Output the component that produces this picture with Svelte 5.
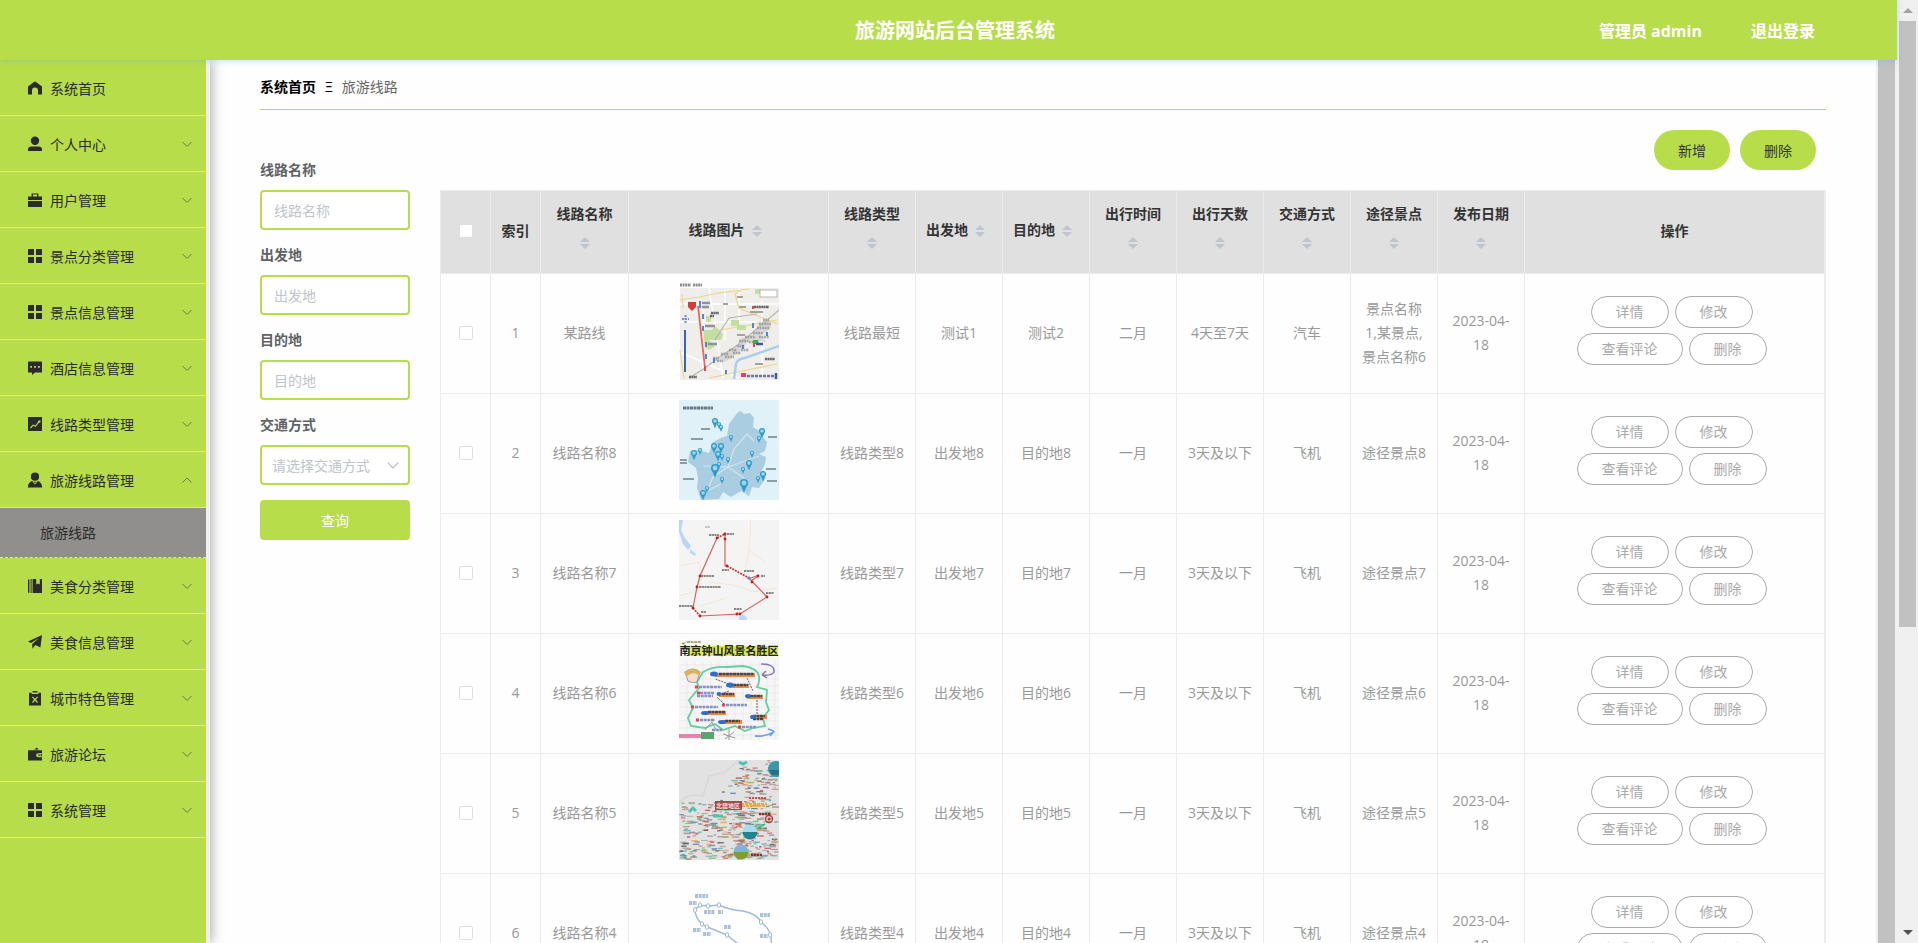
<script lang="ts">
    type MenuItem = { name: string; icon: string; plain?: boolean; children?: string[] };

    const menus: MenuItem[] = [
        { name: "系统首页", icon: "home", plain: true },
        { name: "个人中心", icon: "user" },
        { name: "用户管理", icon: "suitcase" },
        { name: "景点分类管理", icon: "grid" },
        { name: "景点信息管理", icon: "grid" },
        { name: "酒店信息管理", icon: "comment" },
        { name: "线路类型管理", icon: "chart" },
        { name: "旅游线路管理", icon: "custom", children: ["旅游线路"] },
        { name: "美食分类管理", icon: "book" },
        { name: "美食信息管理", icon: "plane" },
        { name: "城市特色管理", icon: "release" },
        { name: "旅游论坛", icon: "wallet" },
        { name: "系统管理", icon: "grid" },
    ];

    const icons: Record<string, string> = {
        home: "M7 0.4 L8 1 L14 5.6 V13.6 H10 V9.4 A3 3 0 0 0 4 9.4 V13.6 H0 V5.6 L6 1 Z",
        user: "M7 -0.4 A4.2 4.2 0 0 1 7 8 A4.2 4.2 0 0 1 7 -0.4 Z M0 14 V12.6 Q0 9.4 3.4 9.4 H10.6 Q14 9.4 14 12.6 V14 Z",
        suitcase:
            "M3.6 3.4 V0.4 H10.4 V3.4 H14 V7 H0 V3.4 Z M5 1.6 V3.4 H9 V1.6 Z M0 8 H14 V14 H0 Z",
        grid: "M0.6 0 H6 V6 H0 V0.6 Z M8 0 H13.4 L14 0.6 V6 H8 Z M0 8 H6 V14 H0.6 L0 13.4 Z M8 8 H14 V13.4 L13.4 14 H8 Z",
        comment:
            "M0.5 0.5 H13.5 L14 1 V11.6 H7 L4 14 V11.6 H0 V1 Z M2.2 5 V6.8 H4 V5 Z M6.1 5 V6.8 H7.9 V5 Z M10 5 V6.8 H11.8 V5 Z",
        chart: "M0 0 H14 V14 H0 Z M2 10.6 L2.8 11.4 L5.4 8.8 L7.6 10 L11 5.4 L12.2 6 L12.4 3 L9.6 4.2 L10.2 4.8 L7.2 8.6 L5 7.6 Z",
        custom: "M7 -0.4 A3.9 3.9 0 0 1 7 7.8 A3.9 3.9 0 0 1 7 -0.4 Z M-0.2 14.4 Q0.2 9.2 4.2 8 L7 11.6 L9.8 8 Q13.8 9.2 14.2 14.4 Z M7 10.2 L5.8 8.8 H8.2 Z",
        book: "M0 0.4 H1.4 V13.8 H0 Z M2.6 0 H3.6 V14 H2.6 Z M4.6 0 H8.2 V5.6 L10 4.4 L11.8 5.6 V0 H14 V14 H4.6 Z",
        plane: "M14 0 L12.4 12.6 L7.4 10 L4.4 13.8 L4.2 9 L11.2 2.8 L3 8 L0 6.4 Z",
        release:
            "M4.6 0 H9.4 V1.6 H4.6 Z M1 1.8 H3.6 V3 H10.4 V1.8 H13 V14.4 H1 Z M4.8 5.4 L4 6.2 L6 8.6 L4 11.2 L5 12 L7 9.6 L9 12 L10 11.2 L8 8.6 L10 6.2 L9.2 5.4 L7 7.8 Z",
        wallet: "M6 2.6 L9 0.4 L10.8 2.6 Z M0.6 3.2 H13.4 L14 3.8 V6.2 H10.6 Q8 6.2 8 8.2 Q8 10.2 10.6 10.2 H14 V13.4 H0 V3.8 Z M10.4 7.4 H11.8 V9 H10.4 Z M12.6 7.2 H14 V9.2 H12.6 Z",
    };

    const columns = [
        "线路名称",
        "线路图片",
        "线路类型",
        "出发地",
        "目的地",
        "出行时间",
        "出行天数",
        "交通方式",
        "途径景点",
        "发布日期",
    ];

    function route(n: number) {
        return [
            `线路名称${n}`,
            "",
            `线路类型${n}`,
            `出发地${n}`,
            `目的地${n}`,
            "一月",
            "3天及以下",
            "飞机",
            `途径景点${n}`,
            "2023-04-18",
        ];
    }

    const rows = [
        ["某路线", "", "线路最短", "测试1", "测试2", "二月", "4天至7天", "汽车", "景点名称1,某景点,景点名称6", "2023-04-18"],
        route(8),
        route(7),
        route(6),
        route(5),
        route(4),
    ];

    const actions = ["详情", "修改", "查看评论", "删除"];

    const pins = [
        [36, 27, 3], [40, 28, 2], [42, 31, 2], [52, 41, 2], [83, 37, 3], [80, 42, 2], [35, 52, 3], [42, 52, 3],
        [21, 54, 2], [15, 59, 3], [39, 60, 3], [43, 60, 2], [49, 63, 2], [73, 57, 2], [70, 69, 3], [64, 73, 2],
        [36, 76, 4], [40, 68, 2], [84, 80, 3], [79, 82, 2], [43, 83, 2], [65, 91, 4], [28, 92, 2], [24, 99, 3],
    ];

    // seeded so that the dense label map always comes out the same
    function scatter(count: number) {
        let seed = 7;
        const next = () => {
            seed = (seed * 16807) % 2147483647;
            return seed / 2147483647;
        };
        const inks = ["#c9736f", "#8d8b8b", "#d05050", "#5e5a5c", "#e8a14e", "#5f80b9", "#54b3a8", "#c98c8c", "#79b96a", "#a9a3a3"];
        const marks = [];
        while (marks.length < count) {
            const x = next() * 96;
            const y = next() * 99;
            if (y < 42 && x < 66 - y * 0.75) continue;
            marks.push({ x, y, w: 2 + next() * 5, h: 1 + next() * 0.6, fill: inks[Math.floor(next() * inks.length)] });
        }
        return marks;
    }

    const marks = scatter(430);
</script>

{#snippet chevron(up = false)}
    <svg class="chevron" viewBox="0 0 12 12" aria-hidden="true">
        <path d={up ? "M1.5 8.5 L6 4 L10.5 8.5" : "M1.5 4 L6 8.5 L10.5 4"} />
    </svg>
{/snippet}

{#snippet picture(index: number)}
    <svg class="picture" viewBox="0 0 100 100" role="img" aria-label="线路图片">
        {#if index === 0}
            <rect x="1" y="8" width="99" height="92" fill="#efeeea" />
            <path d="M1 5 H12 M14 5 H23" stroke="#8b8b8b" stroke-width="3" stroke-dasharray="2 .6" />
            <path d="M1 24 H100 M1 42 H78 M24 30 V90 M60 8 V44 M46 10 V60 M83 20 V98 M1 72 L60 98 M30 8 L44 98" stroke="#fff" stroke-width="1.4" fill="none" />
            <path d="M1 20 L20 17 L40 13 L70 9 M62 10 L56 14 L60 28 L98 44 M3 14 L4 28 M1 70 L5 99 M40 50 L66 46 L98 40 M30 98 L98 84" stroke="#f1d48a" stroke-width="1.2" fill="none" />
            <path d="M24 50 H33 L36 46 L44 54 L42 60 H30 L36 66 L30 70 L26 68 Z M52 40 H60 V46 H52 Z M58 45 H67 V50 H58 Z M27 36 H32 V42 H27 Z M76 9 H82 V14 H76 Z" fill="#c2dfa0" />
            <path d="M55 99 L57 84 Q58 79 66 78 L100 66" stroke="#a9cdf0" stroke-width="2.4" fill="none" />
            <path d="M10 98 L26 88 L42 76 L60 64 L86 42 L100 30 M36 60 L50 38 L78 34" stroke="#b4b4b2" stroke-width="1.2" fill="none" />
            <path d="M32 80 L46 74 L56 68 L62 58 L72 56 L80 44 L90 38 L92 48 L82 56 L88 62 L70 60 L60 72 L46 82 Z" fill="#c6c8c8" opacity=".6" />
            <path d="M34 78 H40 M42 74 H50 M38 81 H44 M50 70 H58 M46 77 H55 M58 66 H66 M54 73 H62 M60 61 H70 M66 57 H76 M70 62 H80 M74 53 H84 M78 48 H90 M80 44 H92 M84 40 H90 M80 57 H90 M62 70 H70" stroke="#8d9194" stroke-width="2.400" stroke-dasharray="1.800 .8" opacity=".8" fill="none" />
            <path d="M19 26 L26 88" stroke="#f0625c" stroke-width="1.8" />
            <path d="M9 22 H17 V27 L13 31 L9 27 Z" fill="#d23c3f" />
            <path d="M6 50 V92" stroke="#3a62c0" stroke-width="2" />
            <path d="M3 39 H10 M6.500 35 V44" stroke="#6d8ed8" stroke-width="2" stroke-dasharray="2 1" />
            <path d="M21 21 V28 M24 34 V39 M24 46 V51 M27 62 V67 M27 74 V79 M35 78 V83 M74 43 V48 M64 65 V69 M88 52 V56 M47 90 V94" stroke="#4b8ad0" stroke-width="2" />
            <path d="M23 23 H31 M23 27 H30 M26 46 H36 M29 64 H38" stroke="#8d9298" stroke-width="2.600" />
            <path d="M32 33 H40 M31 36 H35 M75 27 H90 M86 79 H96 M10 97 H18" stroke="#666" stroke-width="2.4" stroke-dasharray="2 .4" />
            <path d="M58 17 H64 M44 24 H49 M60 27 H67 M71 32 H84 M58 55 H66 M76 84 H84" stroke="#a4a29c" stroke-width="2" />
            <rect x="81" y="10" width="17" height="7" fill="#fff" stroke="#b5b5b5" />
            <path d="M74 60 H79 V64 H74 Z" fill="#3fae3f" />
            <path d="M74 26 V29 M75 63 V67 M26 86 V91" stroke="#dd4a45" stroke-width="2" />
            <path d="M62 95 H67" stroke="#df4560" stroke-width="4" />
            <path d="M68 96 H96" stroke="#6673ad" stroke-width="2.6" stroke-dasharray="3 1" />
            <path d="M97 93 V99 M77 64 H84" stroke="#3c55a5" stroke-width="2.4" />
        {:else if index === 1}
            <rect width="100" height="100" fill="#e0f1f8" />
            <path d="M59 12 L62 11 L65 14 L71 13 L75 18 L74 27 L79 30 L83 36 L88 42 L86 51 L80 54 L87 57 L86 64 L82 72 L87 78 L80 88 L73 87 L70 96 L62 91 L52 97 L44 92 L40 99 L22 100 L18 88 L19 78 L17 68 L9 62 L11 51 L20 50 L30 53 L34 42 L42 38 L48 36 L50 24 Z" fill="#abcde2" />
            <path d="M28 91 L34 77 L49 67 L24 66 M49 67 L55 49 L68 34 L75 41 M49 67 L65 78 L66 94 M49 67 L80 56 M28 91 L42 84" stroke="#d2e4ef" stroke-width="1.2" fill="none" />
            <path d="M4 8 H34" stroke="#687b86" stroke-width="3.2" stroke-dasharray="3 .5" />
            <path d="M22 29 H31 M12 39 H24 M1 60 H8 M1 63 H8 M4 79 H15 M89 37 H98 M87 69 H97 M88 81 H98" stroke="#8b9ca6" stroke-width="1.8" />
            {#each pins as [x, y, r]}
                <path d="M{x - r} {y - r * 2} L{x} {y + r / 2} L{x + r} {y - r * 2} Z" fill="#2f9ccb" />
                <circle cx={x} cy={y - r * 2} {r} fill="#2f9ccb" />
                <circle cx={x} cy={y - r * 2} r={r * 0.6} fill="#9bd6ee" />
            {/each}
        {:else if index === 2}
            <rect width="100" height="100" fill="#f4f4f4" />
            <path d="M0 0 H4 L2 10 L6 18 L12 26 L9 30 L4 24 L0 12 Z M11 29 L17 34 L16 36 L11 33 Z M60 97 Q64 92 68 98 V100 H60 Z" fill="#b9d6f6" />
            <path d="M0 46 L20 42 L24 56 L14 72 L0 76 M72 0 L70 30 L86 42 M70 30 L64 60 M30 62 L60 66 L74 72 L98 68 M22 86 L46 78" stroke="#f4e6d4" fill="none" />
            <path d="M46 14 V46 L48 46 M70 58 L88 77 L61 94 L21 96 M14 88 L18 67 L21 56 L38 18 M72 58 L80 55 M73 60 L80 56" stroke="#dc615b" stroke-width="1.200" fill="none" />
            <path d="M48 46 L70 58 M38 18 L46 14 M14 88 L21 96" stroke="#c93a36" stroke-width="1.800" stroke-dasharray="2 1" />
            {#each [[46, 14], [46, 19], [38, 18], [48, 46], [21, 56], [18, 67], [14, 88], [21, 96], [58, 94], [61, 94], [88, 77], [79, 56], [73, 62]] as [x, y]}
                <circle cx={x} cy={y} r="1.4" fill="#c41f1f" />
            {/each}
            <circle cx="70" cy="58" r="1.600" fill="#4f77d9" />
            <path d="M30 15 H40 M48 14 H55 M43 50 H50 M22 56 H35 M20 67 H42 M0 86 H14 M22 92 H27 M55 89 H63 M65 51 H75 M82 56 H86 M87 73 H95" stroke="#8b8583" stroke-width="2.2" stroke-dasharray="2.2 .5" />
            <path d="M26 7 H31" stroke="#b7b7b7" stroke-width="1.4" />
        {:else if index === 3}
            <rect width="100" height="100" fill="#f6f6f6" />
            <path d="M0 25 H100 M0 32 H100 M0 39 H100 M0 46 H100 M0 53 H100 M0 60 H100 M0 67 H100 M0 74 H100 M0 81 H100 M0 88 H100 M0 95 H100 M8 22 V100 M16 22 V100 M24 22 V100 M32 22 V100 M40 22 V100 M48 22 V100 M56 22 V100 M64 22 V100 M72 22 V100 M80 22 V100 M88 22 V100 M96 22 V100" stroke="#e6e7ea" stroke-width=".7" />
            <path d="M3 6 H99 V16 H10 V9 H3 Z" fill="#d8ea59" />
            <path d="M3 3 Q5 5 6 2 M8 2 H22" stroke="#8d9a3d" stroke-width="1.6" fill="none" stroke-dasharray="3 .6" />
            <text class="picture-title" x="50" y="15" text-anchor="middle">南京钟山风景名胜区</text>
            <path d="M24 32 Q34 26 48 27 L64 26 Q78 28 80 36 Q81 42 78 47 L88 50 L87 62 L90 70 L84 78 L86 86 L74 88 L66 91 L56 86 L44 90 L36 84 L26 88 L12 86 L9 78 L14 68 L10 60 L20 48 L18 42 Z" stroke="#63cf9e" stroke-width="1.800" fill="none" />
            <path d="M36 35 H76 M50 46 H70 M40 55 H56 M68 57 H84 M26 73 H47 M42 82 H63 M72 77 H88" stroke="#ee8b43" stroke-width="4" />
            <path d="M40 34 H75 M54 45 H69 M43 54 H55 M71 56 H83 M29 72 H46 M46 81 H61 M74 76 H86 M74 79 H84" stroke="#4c4548" stroke-width="2.600" stroke-dasharray="3 .5" />
            <g fill="#2d6fd0">
                <ellipse cx="35" cy="34" rx="4" ry="2.5" />
                <ellipse cx="51" cy="45" rx="4" ry="2.5" />
                <ellipse cx="40" cy="54" rx="2.500" ry="2" />
                <ellipse cx="69" cy="56" rx="3" ry="2" />
                <ellipse cx="26" cy="73" rx="4" ry="2" />
                <ellipse cx="43" cy="82" rx="4" ry="2" />
                <ellipse cx="74" cy="77" rx="3" ry="2" />
            </g>
            <path d="M20 47 H43 M21 53 H35 M18 56 H34 M16 67 H39 M47 65 H68 M21 80 H36 M33 90 H43 M63 87 H77" stroke="#8591c4" stroke-width="2.400" stroke-dasharray="3 .7" />
            <path d="M16 47 H19 M18 53 H21 M12 67 H15 M43 65 H46 M17 80 H20 M59 87 H62" stroke="#e0434f" stroke-width="3" />
            <path d="M47 43 L36 39 M68 38 L74 51 M78 60 V74 M45 64 L38 57 M50 51 L42 54" stroke="#54515c" stroke-width=".9" stroke-dasharray="2 1" fill="none" />
            <path d="M6 32 Q14 26 21 32 L18 42 Q13 44 9 41 Z" fill="#f3ded0" stroke="#8a756b" stroke-width=".7" />
            <path d="M5 33 Q14 25 22 32 L20 35 Q14 31 8 36 Z" fill="#d8b45a" />
            <path d="M82 24 Q96 24 95 32 Q93 36 83 35 M83 35 L87 31 M83 35 L88 38" stroke="#8277b5" stroke-width="1.4" fill="none" />
            <path d="M76 96 Q86 97 95 92 M95 91 L89 89 M95 91 L91 96" stroke="#6ba5e9" stroke-width="1.8" fill="none" />
            <path d="M0 96 H23" stroke="#e784ab" stroke-width="4" />
            <path d="M22 92 H35 V99 H22 Z" fill="#5aa56f" />
            <path d="M26 90 L33 82 L37 90 M44 94 L56 98 M50 89 V100 M55 92 L46 99" stroke="#9a9a9a" fill="none" />
        {:else if index === 4}
            <rect width="100" height="100" fill="#e2e2e2" />
            <path d="M0 44 Q8 32 24 36 L30 16 L46 12 L60 0" stroke="#d9d9d9" fill="none" stroke-width="2" />
            {#each marks as m}
                <rect x={m.x} y={m.y} width={m.w} height={m.h} fill={m.fill} opacity=".8" />
            {/each}
            <path d="M60 2 L64 4 L68 2 M34 56 H44 M10 52 L14 48 L17 51" stroke="#4cc3b4" stroke-width="3" fill="none" />
            <path d="M62 44 H88 M63 46 H86" stroke="#f0a548" stroke-width="2" stroke-dasharray="3 1" />
            <path d="M70 38 H88" stroke="#d24848" stroke-width="2" stroke-dasharray="2 1" />
            <path d="M76 70 L86 64 M4 94 L7 99" stroke="#3fb98f" stroke-width="2" />
            <rect x="36" y="41" width="27" height="9" fill="#a8474c" />
            <text class="picture-tag" x="49" y="48" text-anchor="middle">北疆地区</text>
            <circle cx="97" cy="9" r="8" fill="#3a96ab" />
            <path d="M90 10 H100 V15 H93 Z" fill="#2a6f86" />
            <circle cx="71" cy="72" r="7.500" fill="#a9dcea" />
            <path d="M63.500 72 H78.500 A7.500 7.500 0 0 1 63.500 72 Z" fill="#1f8390" />
            <circle cx="62" cy="92" r="7.500" fill="#7eb3e0" />
            <path d="M54.500 92 H69.500 A7.500 7.500 0 0 1 54.500 92 Z" fill="#7f9e2c" />
            <circle cx="90" cy="59" r="3.500" fill="none" stroke="#b53942" stroke-width="1.400" />
            <circle cx="90" cy="59" r="1.600" fill="#b53942" />
            <path d="M80 54 H92 M72 95 H83" stroke="#7b3337" stroke-width="2.400" stroke-dasharray="2.500 .5" />
        {:else}
            <path d="M16 29 Q22 24 30 26 L40 25 Q50 30 64 31 Q78 34 82 42 Q90 48 92 56 L93 80 L72 74 L58 63 L48 55 L36 50 L28 47 L23 44 Q16 38 16 29" stroke="#9dbad6" stroke-width="1.4" fill="none" />
            {#each [[16, 30], [21, 25], [29, 26], [40, 25], [23, 44], [28, 47], [48, 55], [82, 42], [91, 55]] as [x, y]}
                <ellipse cx={x} cy={y} rx="1.600" ry="2.400" fill="#fdfdfd" stroke="#8baccb" stroke-width=".8" />
            {/each}
            <path d="M16 16 H29 M10 23 H18 M25 32 H36 M39 32 H44 M14 50 H22 M24 54 H32 M45 47 H52 M81 35 H91 M81 56 H89" stroke="#a9c1d9" stroke-width="4" stroke-dasharray="3 .7" />
        {/if}
    </svg>
{/snippet}

<div class="window">
    <div class="app">
        <header>
            <h1>旅游网站后台管理系统</h1>
            <div class="account">
                <span>管理员 admin</span>
                <a href="#logout">退出登录</a>
            </div>
        </header>

        <div class="body">
            <nav>
                {#each menus as menu}
                    <a class="menu-item" href="#menu">
                        <svg class="menu-icon" viewBox="0 0 14 14" aria-hidden="true">
                            <path fill-rule="evenodd" d={icons[menu.icon]} />
                        </svg>
                        <span>{menu.name}</span>
                        {#if !menu.plain}
                            {@render chevron(!!menu.children)}
                        {/if}
                    </a>
                    {#each menu.children ?? [] as child}
                        <a class="submenu-item" href="#submenu">{child}</a>
                    {/each}
                {/each}
            </nav>

            <main>
                <div class="breadcrumb">
                    <a href="#home">系统首页</a>
                    <span class="separator">Ξ</span>
                    <span>旅游线路</span>
                </div>

                <div class="toolbar">
                    <button>新增</button>
                    <button>删除</button>
                </div>

                <div class="content">
                    <form>
                        <label for="route-name">线路名称</label>
                        <input id="route-name" type="text" placeholder="线路名称" />
                        <label for="origin">出发地</label>
                        <input id="origin" type="text" placeholder="出发地" />
                        <label for="target">目的地</label>
                        <input id="target" type="text" placeholder="目的地" />
                        <label for="traffic">交通方式</label>
                        <div class="select">
                            <select id="traffic">
                                <option>请选择交通方式</option>
                                <option>飞机</option>
                                <option>汽车</option>
                            </select>
                            {@render chevron()}
                        </div>
                        <button type="button">查询</button>
                    </form>

                    <table>
                        <colgroup>
                            <col class="col-small" />
                            <col class="col-small" />
                            <col class="col-name" />
                            <col class="col-picture" />
                            <col span="8" />
                            <col class="col-actions" />
                        </colgroup>
                        <thead>
                            <tr>
                                <th><input type="checkbox" aria-label="全选" /></th>
                                <th>索引</th>
                                {#each columns as column}
                                    <th>
                                        {column}<span class="sort">
                                            <svg viewBox="0 0 10 12" aria-hidden="true">
                                                <path d="M0 5 L5 0 L10 5 Z M0 7 L5 12 L10 7 Z" />
                                            </svg>
                                        </span>
                                    </th>
                                {/each}
                                <th>操作</th>
                            </tr>
                        </thead>
                        <tbody>
                            {#each rows as row, i}
                                <tr>
                                    <td><input type="checkbox" aria-label="选择第{i + 1}行" /></td>
                                    <td>{i + 1}</td>
                                    {#each row as cell, c}
                                        {#if c === 1}
                                            <td>{@render picture(i)}</td>
                                        {:else}
                                            <td>{cell}</td>
                                        {/if}
                                    {/each}
                                    <td>
                                        <div class="actions">
                                            {#each actions as action}
                                                <button>{action}</button>
                                            {/each}
                                        </div>
                                    </td>
                                </tr>
                            {/each}
                        </tbody>
                    </table>
                </div>
            </main>

            <div class="scrollbar" aria-hidden="true">
                <div class="thumb full"></div>
            </div>
        </div>
    </div>

    <div class="scrollbar outer" aria-hidden="true">
        <svg class="arrow muted" viewBox="0 0 10 5"><path d="M0 5 L5 0 L10 5 Z" /></svg>
        <div class="thumb"></div>
        <svg class="arrow" viewBox="0 0 10 5"><path d="M0 0 L5 5 L10 0 Z" /></svg>
    </div>
</div>

<style>
    :global(body) {
        margin: 0;
        overflow: hidden;
    }

    .window {
        --green: #b8dd4a;
        display: flex;
        height: 100vh;
        overflow: hidden;
        background: #fefefe;
        font-family: "Open Sans", "Noto Sans CJK SC", sans-serif;
        font-size: 14px;
        color: #999;
    }

    .window * {
        box-sizing: border-box;
    }

    a {
        color: inherit;
        text-decoration: none;
    }

    button,
    input,
    select {
        font: inherit;
    }

    button {
        cursor: pointer;
    }

    .app {
        flex: 1;
        min-width: 0;
        display: flex;
        flex-direction: column;
    }

    header {
        position: relative;
        z-index: 2;
        flex: none;
        display: grid;
        grid-template-columns: 1fr auto 1fr;
        align-items: center;
        height: 60px;
        padding: 2px 82px 0 95px;
        background: var(--green);
        box-shadow: 0 1px 6px rgba(64, 158, 255, 0.3);
        color: #fff;
    }

    h1 {
        grid-column: 2;
        margin: 0;
        font-size: 20px;
        line-height: 58px;
        font-weight: 700;
    }

    .account {
        display: flex;
        justify-content: flex-end;
        gap: 49px;
        font-size: 16px;
        line-height: 58px;
        font-weight: 700;
    }

    .body {
        flex: 1;
        min-height: 0;
        display: flex;
    }

    nav {
        position: relative;
        z-index: 1;
        flex: none;
        width: 210px;
        border-right: 4px solid #f0f0f0;
        background: var(--green);
        box-shadow: 1px 0 12px rgba(0, 0, 0, 0.35);
        color: #2b2b2b;
    }

    .menu-item {
        display: flex;
        align-items: center;
        gap: 8px;
        height: 56px;
        padding: 0 13px 0 28px;
        border-bottom: 1px solid #ddd;
    }

    .menu-icon {
        width: 14px;
        height: 14px;
        overflow: visible;
        fill: #2b2b2b;
    }

    .chevron {
        width: 12px;
        height: 12px;
        margin-left: auto;
        fill: none;
        stroke: #6c7c3c;
        stroke-width: 1;
    }

    .submenu-item {
        display: block;
        height: 50px;
        padding-left: 40px;
        border-bottom: 1px dashed #ddd;
        background: #908f8d;
        line-height: 50px;
    }

    main {
        flex: 1;
        min-width: 0;
        padding: 0 50px;
        overflow: hidden;
    }

    .breadcrumb {
        display: flex;
        gap: 9px;
        height: 50px;
        padding-top: 5px;
        border-bottom: 1px solid var(--green);
        line-height: 44px;
        color: #666;
    }

    .breadcrumb a {
        color: #000;
        font-weight: 700;
    }

    .separator {
        color: #000;
    }

    .toolbar {
        display: flex;
        justify-content: flex-end;
        gap: 10px;
        padding: 20px 10px;
    }

    .toolbar button {
        width: 76px;
        height: 40px;
        padding: 0;
        border: 0;
        border-radius: 20px;
        background: var(--green);
        color: #333;
    }

    .content {
        display: flex;
        align-items: flex-start;
        gap: 30px;
    }

    form {
        flex: none;
        width: 150px;
        margin-top: -40px;
        display: flex;
        flex-direction: column;
    }

    form label {
        line-height: 40px;
        font-weight: 600;
        color: #606266;
    }

    form input,
    form select {
        width: 100%;
        height: 40px;
        margin: 0 0 5px;
        padding: 0 12px;
        border: 2px solid var(--green);
        border-radius: 4px;
        outline: none;
        background: #fff;
        color: #c0c4cc;
    }

    form input::placeholder {
        color: #c0c4cc;
    }

    .select {
        position: relative;
        height: 40px;
        margin-bottom: 15px;
    }

    .select select {
        appearance: none;
        padding: 0 10px;
    }

    .select .chevron {
        position: absolute;
        top: 13px;
        right: 10px;
        width: 14px;
        height: 14px;
        pointer-events: none;
        stroke: #b4b8c0;
    }

    form button {
        height: 40px;
        border: 0;
        border-radius: 4px;
        background: var(--green);
        color: #fff;
    }

    table {
        flex: 1;
        min-width: 0;
        width: 0;
        border: 1px solid #ebebeb;
        border-right-width: 2px;
        border-spacing: 0;
        table-layout: fixed;
        text-align: center;
        line-height: 24px;
    }

    .col-small {
        width: 50px;
    }

    .col-name {
        width: 88px;
    }

    .col-picture {
        width: 200px;
    }

    .col-actions {
        width: 299px;
    }

    th,
    td {
        padding: 5px 10px 7px;
        border-right: 1px solid #ebebeb;
        border-bottom: 1px solid #ebebeb;
    }

    th:last-child,
    td:last-child {
        border-right: 0;
    }

    th {
        height: 83px;
        background: #e0e0e0;
        color: #333;
        font-weight: 700;
    }

    .sort {
        display: inline-flex;
        align-items: center;
        justify-content: center;
        width: 24px;
        height: 34px;
        vertical-align: middle;
    }

    .sort svg {
        width: 10px;
        height: 12px;
        fill: #c0c4cc;
    }

    input[type="checkbox"] {
        appearance: none;
        display: block;
        width: 14px;
        height: 14px;
        margin: 0 auto;
        border: 1px solid #dcdfe6;
        border-radius: 2px;
        background: #fff;
    }

    .picture {
        display: block;
        width: 100px;
        height: 100px;
        margin: 1px auto 6px;
    }

    .picture-title {
        font-size: 11px;
        font-weight: 700;
        fill: #222;
    }

    .picture-tag {
        font-size: 6px;
        font-weight: 700;
        fill: #f3dede;
    }

    .actions {
        display: flex;
        flex-wrap: wrap;
        justify-content: center;
    }

    .actions button {
        height: 32px;
        margin: 0 6px 5px 0;
        padding: 0 24px;
        border: 1px solid #aaa;
        border-radius: 16px;
        background: #fff;
        color: #aaa;
        line-height: 24px;
    }

    .scrollbar {
        flex: none;
        width: 21px;
        padding: 0 2px;
        background: #f0f0f0;
    }

    .outer {
        display: flex;
        flex-direction: column;
        align-items: center;
    }

    .thumb {
        flex: none;
        width: 17px;
        height: 64.3%;
        background: #c1c1c1;
    }

    .full {
        height: 100%;
    }

    .arrow {
        width: 10px;
        height: 5px;
        margin: auto 0 8px;
        fill: #505050;
    }

    .muted {
        margin: 8px 0;
        fill: #a3a3a3;
    }
</style>
